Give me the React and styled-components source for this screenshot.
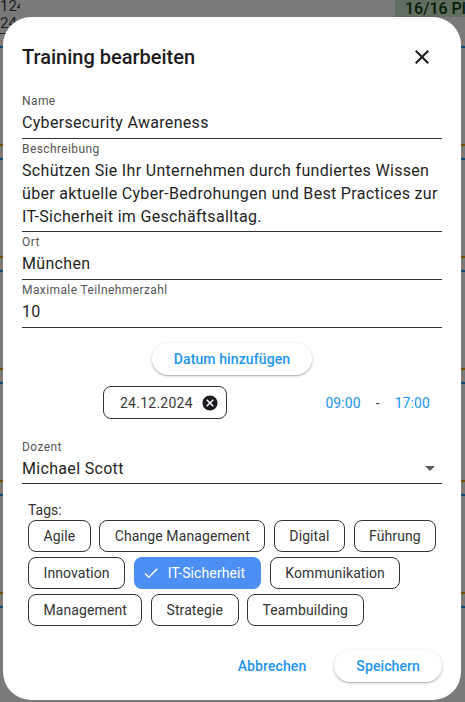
import React from "react";
import styled, { createGlobalStyle } from "styled-components";

const GlobalStyle = createGlobalStyle`
  html, body {
    margin: 0;
    padding: 0;
  }
  body {
    font-family: Roboto, "Noto Sans", sans-serif;
    -webkit-font-smoothing: antialiased;
  }
`;

const TAGS = [
  "Agile",
  "Change Management",
  "Digital",
  "Führung",
  "Innovation",
  "IT-Sicherheit",
  "Kommunikation",
  "Management",
  "Strategie",
  "Teambuilding",
];

const SELECTED = ["IT-Sicherheit"];

const App = () => {
  return (
    <>
      <GlobalStyle />
      <Page>
        <BackgroundPage>
          <BgTopRow>
            <BgDate>124</BgDate>
            <BgPill>16/16 Pl</BgPill>
          </BgTopRow>
          <BgDate underline>24</BgDate>
          {[0, 1, 2, 3, 4, 5].map((i) => (
            <BgSession key={i} />
          ))}
        </BackgroundPage>
        <Scrim />

        <Dialog>
          <Header>
            <Title>Training bearbeiten</Title>
            <CloseButton aria-label="Schließen">
              <svg width="24" height="24" viewBox="0 0 24 24">
                <path
                  fill="#1d1b20"
                  d="M19 6.41L17.59 5 12 10.59 6.41 5 5 6.41 10.59 12 5 17.59 6.41 19 12 13.41 17.59 19 19 17.59 13.41 12z"
                />
              </svg>
            </CloseButton>
          </Header>

          <Fields>
            <Field>
              <Label>Name</Label>
              <Value>Cybersecurity Awareness</Value>
            </Field>
            <Field>
              <Label>Beschreibung</Label>
              <Value multiline>
                {"Schützen Sie Ihr Unternehmen durch fundiertes Wissen\nüber aktuelle Cyber-Bedrohungen und Best Practices zur\nIT-Sicherheit im Geschäftsalltag."}
              </Value>
            </Field>
            <Field>
              <Label>Ort</Label>
              <Value>München</Value>
            </Field>
            <Field>
              <Label>Maximale Teilnehmerzahl</Label>
              <Value>10</Value>
            </Field>
          </Fields>

          <PillButton>Datum hinzufügen</PillButton>

          <DateRow>
            <DateChip>
              24.12.2024
              <svg width="18" height="18" viewBox="0 0 24 24">
                <path
                  fill="#1d1b20"
                  d="M12 2C6.47 2 2 6.47 2 12s4.47 10 10 10 10-4.47 10-10S17.53 2 12 2zm5 13.59L15.59 17 12 13.41 8.41 17 7 15.59 10.59 12 7 8.41 8.41 7 12 10.59 15.59 7 17 8.41 13.41 12 17 15.59z"
                />
              </svg>
            </DateChip>
            <TimeGroup>
              <TimeText>09:00</TimeText>
              <Dash>-</Dash>
              <TimeText>17:00</TimeText>
            </TimeGroup>
          </DateRow>

          <SelectField>
            <Label>Dozent</Label>
            <SelectValue>
              <Value>Michael Scott</Value>
              <svg width="24" height="24" viewBox="0 0 24 24">
                <path fill="#5a5a5a" d="M7 10l5 5 5-5z" />
              </svg>
            </SelectValue>
          </SelectField>

          <TagsSection>
            <TagsLabel>Tags:</TagsLabel>
            <TagList>
              {TAGS.map((tag) => {
                const selected = SELECTED.includes(tag);
                return (
                  <Tag key={tag} selected={selected}>
                    {selected && (
                      <svg width="18" height="18" viewBox="0 0 24 24">
                        <path
                          fill="#ffffff"
                          d="M9 16.17L4.83 12l-1.42 1.41L9 19 21 7l-1.41-1.41z"
                        />
                      </svg>
                    )}
                    {tag}
                  </Tag>
                );
              })}
            </TagList>
          </TagsSection>

          <Actions>
            <TextButton>Abbrechen</TextButton>
            <PillButton as="button" small>
              Speichern
            </PillButton>
          </Actions>
        </Dialog>
      </Page>
    </>
  );
};

// Seite dahinter
const Page = styled.div`
  position: relative;
  width: 465px;
  height: 702px;
  overflow: hidden;
  background: #ffffff;
`;

const BackgroundPage = styled.div`
  display: flex;
  flex-direction: column;
`;

const BgTopRow = styled.div`
  display: flex;
  justify-content: space-between;
  align-items: flex-start;
  height: 17px;
`;

const BgDate = styled.span`
  display: block;
  width: 20px;
  height: 17px;
  overflow: hidden;
  font-size: 15px;
  line-height: 12px;
  color: #444;
  border-bottom: ${({ underline }) => (underline ? "1px solid #444" : "none")};
  box-sizing: border-box;
`;

const BgPill = styled.span`
  width: 70px;
  height: 17px;
  padding-left: 10px;
  box-sizing: border-box;
  background: #c9e7c9;
  color: #0f3d12;
  font-size: 16px;
  font-weight: 500;
  line-height: 18px;
  white-space: nowrap;
  overflow: hidden;
`;

const BgSession = styled.div`
  height: 96px;
  border-top: 2px solid #2196f3;
  border-bottom: 2px solid #ff9800;
  margin-top: 12px;
`;

const Scrim = styled.div`
  position: absolute;
  inset: 0;
  background: rgba(0, 0, 0, 0.52);
`;

// Dialog
const Dialog = styled.div`
  position: absolute;
  left: 3px;
  top: 17px;
  width: 458px;
  height: 683px;
  box-sizing: border-box;
  padding: 24px 19px 18px;
  display: flex;
  flex-direction: column;
  background: #ffffff;
  border-radius: 28px;
`;

const Header = styled.div`
  display: flex;
  justify-content: space-between;
  align-items: center;
  height: 32px;
`;

const Title = styled.h2`
  margin: 0;
  font-size: 20px;
  font-weight: 500;
  line-height: 32px;
  color: #1d1b20;
`;

const CloseButton = styled.button`
  display: flex;
  justify-content: center;
  align-items: center;
  width: 40px;
  height: 32px;
  padding: 0;
  border: none;
  background: none;
`;

const Fields = styled.div`
  display: flex;
  flex-direction: column;
  gap: 2px;
  margin-top: 20px;
`;

const Field = styled.div`
  display: flex;
  flex-direction: column;
  padding-bottom: 3px;
  border-bottom: 1px solid #333;
`;

const Label = styled.span`
  font-size: 12px;
  line-height: 16px;
  letter-spacing: 0.4px;
  color: #555;
`;

const Value = styled.span`
  margin-top: 2px;
  font-size: 16px;
  line-height: ${({ multiline }) => (multiline ? "23px" : "24px")};
  letter-spacing: 0.32px;
  color: #1f1f1f;
  white-space: pre;
`;

const PillButton = styled.button`
  align-self: center;
  height: 32px;
  margin-top: ${({ small }) => (small ? "0" : "15px")};
  padding: 0 22px;
  border: none;
  border-radius: 16px;
  background: #ffffff;
  box-shadow: 0 1px 3px rgba(0, 0, 0, 0.25), 0 1px 1px rgba(0, 0, 0, 0.12);
  color: #2196f3;
  font-family: inherit;
  font-size: 14px;
  font-weight: 500;
  letter-spacing: 0.1px;
`;

const DateRow = styled.div`
  display: flex;
  align-items: center;
  margin-top: 11px;
  padding: 0 12px 0 81px;
`;

const DateChip = styled.div`
  display: inline-flex;
  align-items: center;
  gap: 8px;
  height: 33px;
  box-sizing: border-box;
  padding: 0 7px 0 16px;
  border: 1.5px solid #333;
  border-radius: 8px;
  font-size: 14px;
  letter-spacing: 0.25px;
  color: #3a3a3a;
`;

const TimeGroup = styled.div`
  display: flex;
  align-items: center;
  gap: 15px;
  margin-left: auto;
`;

const TimeText = styled.span`
  font-size: 14px;
  letter-spacing: 0.1px;
  color: #2196f3;
`;

const Dash = styled.span`
  font-size: 14px;
  color: #444;
`;

const SelectField = styled(Field)`
  margin-top: 20px;
  padding-bottom: 2px;
`;

const SelectValue = styled.div`
  display: flex;
  justify-content: space-between;
  align-items: center;
`;

const TagsSection = styled.div`
  display: flex;
  flex-direction: column;
  gap: 2px;
  margin-top: 18px;
  padding-left: 6px;
`;

const TagsLabel = styled.span`
  font-size: 14px;
  line-height: 16px;
  color: #333;
`;

const TagList = styled.div`
  display: flex;
  flex-wrap: wrap;
  gap: 5px 8.5px;
`;

const Tag = styled.div`
  display: inline-flex;
  align-items: center;
  gap: 8px;
  height: 32px;
  box-sizing: border-box;
  padding: ${({ selected }) => (selected ? "0 16px 0 8px" : "0 14.5px")};
  border: ${({ selected }) => (selected ? "none" : "1.5px solid #333")};
  border-radius: 8px;
  background: ${({ selected }) => (selected ? "#4c8ff5" : "transparent")};
  color: ${({ selected }) => (selected ? "#ffffff" : "#333")};
  font-size: 14px;
  letter-spacing: 0.1px;
  white-space: nowrap;
`;

const Actions = styled.div`
  display: flex;
  justify-content: flex-end;
  align-items: center;
  gap: 16px;
  margin-top: auto;
`;

const TextButton = styled.button`
  height: 32px;
  padding: 0 12px;
  border: none;
  background: none;
  color: #2196f3;
  font-family: inherit;
  font-size: 14px;
  font-weight: 500;
  letter-spacing: 0.1px;
`;

export default App;
